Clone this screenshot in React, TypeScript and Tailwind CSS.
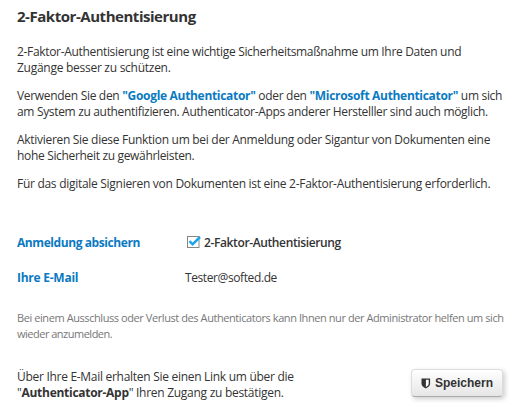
import React from "react";

function Row({ children, className = "" }: { children: React.ReactNode; className?: string }) {
  return <span className={`block whitespace-nowrap ${className}`}>{children}</span>;
}

function Brand({ children, className = "" }: { children: React.ReactNode; className?: string }) {
  return <b className={`font-bold text-[#0a7ac2] ${className}`}>{children}</b>;
}

export default function App() {
  return (
    <main className="h-[417px] w-[520px] overflow-hidden bg-white pl-[17px] font-['Open_Sans','Noto_Sans',sans-serif] text-[12px] leading-4 text-[#333]">
      <h1 className="pt-[6px] text-[15px] leading-5 font-bold tracking-[-0.46px] whitespace-nowrap">2-Faktor-Authentisierung</h1>
      <div className="mt-[18px] flex flex-col gap-3">
        <p>
          <Row className="tracking-[-0.325px]">2-Faktor-Authentisierung ist eine wichtige Sicherheitsmaßnahme um Ihre Daten und</Row>
          <Row className="tracking-[-0.27px]">Zugänge besser zu schützen.</Row>
        </p>
        <p>
          <Row className="tracking-[-0.31px]">
            Verwenden Sie den <Brand>"Google Authenticator"</Brand> oder den <Brand>"Microsoft Authenticator"</Brand> um sich
          </Row>
          <Row className="tracking-[-0.33px]">am System zu authentifizieren. Authenticator-Apps anderer Herstelller sind auch möglich.</Row>
        </p>
        <p>
          <Row className="tracking-[-0.295px]">Aktivieren Sie diese Funktion um bei der Anmeldung oder Sigantur von Dokumenten eine</Row>
          <Row className="tracking-[-0.33px]">hohe Sicherheit zu gewährleisten.</Row>
        </p>
        <p>
          <Row className="tracking-[-0.285px]">Für das digitale Signieren von Dokumenten ist eine 2-Faktor-Authentisierung erforderlich.</Row>
        </p>
      </div>
      <div className="mt-[43px] grid grid-cols-[168px_1fr] gap-y-[19px]">
        <Brand className="tracking-[-0.42px]">Anmeldung absichern</Brand>
        <label className="flex h-4 items-center gap-[3px] pl-[2px] font-semibold tracking-[-0.375px] whitespace-nowrap">
          <svg width="14" height="14" viewBox="0 0 14 14" fill="none" className="-mt-[2px]">
            <rect x="0.5" y="1.5" width="11.5" height="11" fill="#fff" stroke="#858585" />
            <path d="M2.5 6.2 5.6 9.3 13 2" stroke="#17a5ee" strokeWidth="2.5" />
          </svg>
          2-Faktor-Authentisierung
        </label>
        <Brand className="tracking-[-0.25px]">Ihre E-Mail</Brand>
        <span className="tracking-[-0.4px]">Tester@softed.de</span>
      </div>
      <p className="mt-[24px] text-[11px] text-[#777]">
        <Row className="tracking-[-0.42px]">Bei einem Ausschluss oder Verlust des Authenticators kann Ihnen nur der Administrator helfen um sich</Row>
        <Row className="tracking-[-0.5px]">wieder anzumelden.</Row>
      </p>
      <div className="mt-[27px] flex justify-between pr-[17px]">
        <p>
          <Row className="tracking-[-0.29px]">Über Ihre E-Mail erhalten Sie einen Link um über die</Row>
          <Row className="tracking-[-0.28px]">"<b className="font-bold">Authenticator-App</b>" Ihren Zugang zu bestätigen.</Row>
        </p>
        <button className="flex h-[28px] w-[92px] items-center justify-center gap-[4px] rounded-[4px] border border-[#ddd] border-b-[#aaa] bg-linear-to-b from-white to-[#e6e6e6] font-['Liberation_Sans',sans-serif] text-[12px] font-bold shadow-[2px_2px_5px_rgba(0,0,0,0.2)]">
          <svg width="10" height="11" viewBox="0 0 10 11">
            <path d="M.5.5h8.6v5.3c0 2.1-2.1 3.5-4.3 4.6C2.6 9.3.5 7.9.5 5.8Z" fill="#333" />
            <path d="M4.9 1.8h2.8v4c0 1.3-1.3 2.3-2.8 3.1Z" fill="#fff" />
          </svg>
          Speichern
        </button>
      </div>
    </main>
  );
}
